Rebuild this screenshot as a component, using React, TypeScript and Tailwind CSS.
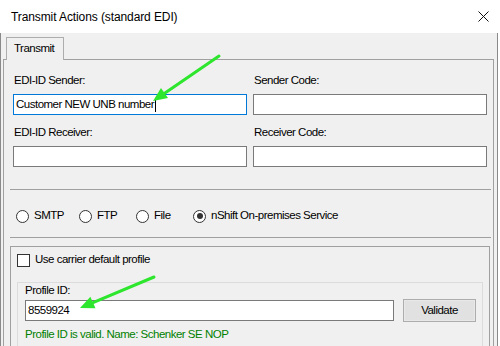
import React from "react";

const font = "font-['Liberation_Sans',Arial,sans-serif]";

function Radio({ label, checked = false, w }: { label: string; checked?: boolean; w: string }) {
  return (
    <label className={`flex shrink-0 items-center gap-[5px] ${w}`}>
      <span className="flex h-[13px] w-[13px] items-center justify-center rounded-full border border-[#333333] bg-white">
        {checked && <span className="h-[6px] w-[6px] rounded-full bg-[#333333]" />}
      </span>
      <span>{label}</span>
    </label>
  );
}

function Field({ label, value, focused = false }: { label: string; value?: string; focused?: boolean }) {
  return (
    <div className="flex flex-col">
      <div className="h-[14px] leading-[14px] pl-[1px]">{label}</div>
      <div
        className={
          focused
            ? "mt-[7px] flex h-[21px] items-center border border-[#0078d7] bg-white pl-[2px]"
            : "mt-[7px] flex h-[21px] items-center border border-[#7a7a7a] bg-white pl-[2px]"
        }
      >
        {value && <span>{value}</span>}
        {focused && <span className="ml-[1px] h-[14px] w-px bg-black" />}
      </div>
    </div>
  );
}

export default function App() {
  return (
    <div className={`relative h-[346px] w-[500px] overflow-hidden bg-white text-[11.5px] tracking-[-0.5px] text-black ${font}`}>
      {/* title bar */}
      <div className="flex h-[33px] items-center justify-between pl-[11px] pr-[11px]">
        <span className="text-[12px] tracking-[-0.1px]">Transmit Actions (standard EDI)</span>
        <svg width="11" height="11" viewBox="0 0 11 11">
          <path d="M0.5 0.5 L10.5 10.5 M10.5 0.5 L0.5 10.5" stroke="#111" strokeWidth="1" />
        </svg>
      </div>

      {/* body */}
      <div className="h-[313px] w-[498px] border-l border-r border-[#8a8a8a] bg-[#f0f0f0] pt-[4px]">
        <div className="flex pl-[5px]">
          <div className="relative z-10 -mb-px flex h-[23px] w-[58px] items-center border border-b-0 border-[#adadad] bg-[#f0f0f0] pl-[7px]">
            Transmit
          </div>
        </div>

        <div className="ml-[2px] h-[300px] w-[491px] border border-[#a0a0a0]">
          {/* ids */}
          <div className="grid grid-cols-2 gap-x-[6px] pl-[9px] pr-[6px] pt-[13px]">
            <Field label="EDI-ID Sender:" value="Customer NEW UNB number" focused />
            <Field label="Sender Code:" />
          </div>
          <div className="grid grid-cols-2 gap-x-[6px] pl-[9px] pr-[6px] pt-[10px]">
            <Field label="EDI-ID Receiver:" />
            <Field label="Receiver Code:" />
          </div>

          <div className="ml-[6px] mr-[2px] mt-[22px] h-px bg-[#a0a0a0]" />

          <div className="mt-[19px] flex h-[14px] items-center pl-[12px]">
            <Radio label="SMTP" w="w-[63px]" />
            <Radio label="FTP" w="w-[57px]" />
            <Radio label="File" w="w-[57px]" />
            <Radio label="nShift On-premises Service" checked w="w-[200px]" />
          </div>

          <div className="ml-[6px] mr-[2px] mt-[14px] h-px bg-[#a0a0a0]" />

          {/* profile group */}
          <div className="ml-[6px] mt-[8px] h-[120px] w-[480px] border border-[#a0a0a0] pl-[6px] pr-[6px] pt-[6px]">
            <label className="flex h-[14px] items-center gap-[5px]">
              <span className="h-[13px] w-[13px] border border-[#333333] bg-white" />
              <span>Use carrier default profile</span>
            </label>
            <div className="mt-[15px] h-[80px] border border-[#dcdcdc] pl-[7px]">
              <div className="h-[14px] leading-[14px]">Profile ID:</div>
              <div className="mt-[2px] flex items-center gap-[9px]">
                <div className="flex h-[21px] w-[369px] items-center border border-[#7a7a7a] bg-white pl-[2px]">
                  8559924
                </div>
                <button className="h-[23px] w-[73px] border border-[#adadad] bg-[#e1e1e1] shadow-[inset_0_0_0_1px_#e8e8e8]">
                  Validate
                </button>
              </div>
              <div className="mt-[5px] h-[14px] leading-[14px] text-[#008000]">
                Profile ID is valid. Name: Schenker SE NOP
              </div>
            </div>
          </div>
        </div>
      </div>

      {/* annotation arrows */}
      <svg className="pointer-events-none absolute left-0 top-0" width="500" height="346" viewBox="0 0 500 346">
        <line x1="219" y1="56" x2="165" y2="93" stroke="#2ee62e" strokeWidth="3" strokeLinecap="round" />
        <polygon points="153,101 168,98 161,88" fill="#2ee62e" />
        <line x1="154" y1="277" x2="93" y2="302.6" stroke="#2ee62e" strokeWidth="3" strokeLinecap="round" />
        <polygon points="80,308 95.5,308.3 90.4,296.8" fill="#2ee62e" />
      </svg>
    </div>
  );
}
